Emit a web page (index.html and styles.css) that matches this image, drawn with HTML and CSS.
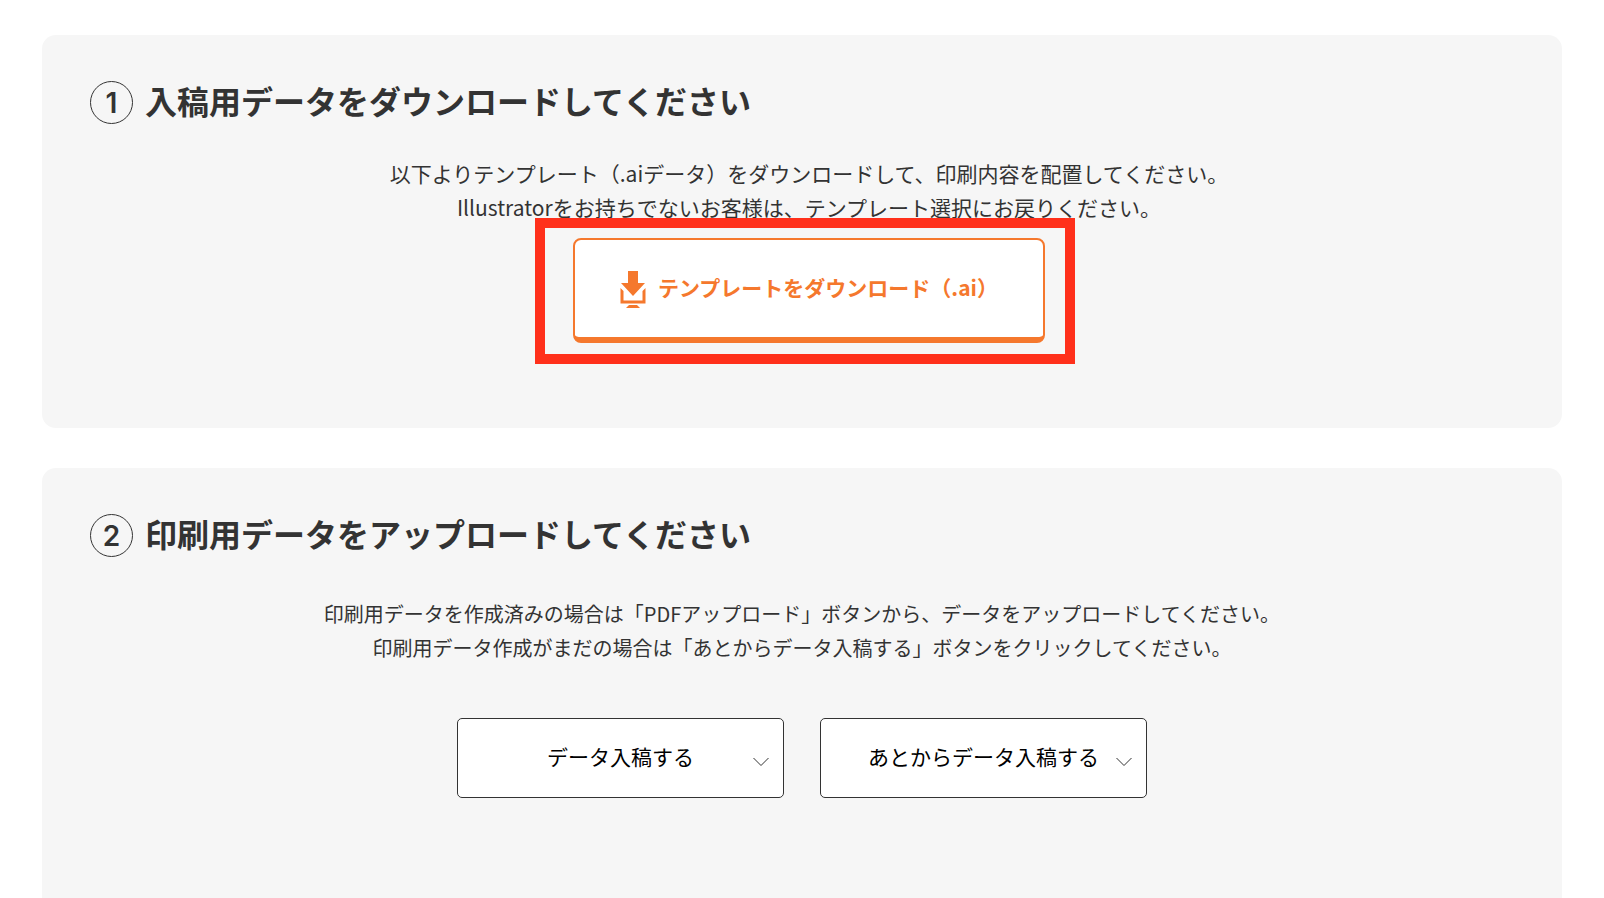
FILE: index.html
```html
<!DOCTYPE html>
<html lang="ja">
  <head>
    <meta charset="utf-8" />
    <meta name="viewport" content="width=device-width, initial-scale=1" />
    <title>データ入稿</title>
    <link rel="stylesheet" href="styles.css">
  </head>
  <body>
    <main class="steps">
      <section class="step">
        <h2 class="step-title"><span class="num">1</span>入稿用データをダウンロードしてください</h2>
        <div class="step-body download">
          <p class="lead">
            以下よりテンプレート（.aiデータ）をダウンロードして、印刷内容を配置してください。<br />
            Illustratorをお持ちでないお客様は、テンプレート選択にお戻りください。
          </p>
          <div class="highlight">
            <a class="btn-download" href="#">
              <svg class="icon" width="26" height="38" viewBox="0 0 26 38" aria-hidden="true">
                <path d="M8 0h10v12h7L13 25 1 12h7z" />
                <path d="M.5 17l3 3v9.500h19V20l3-3v15.500H.5z" />
                <path d="M9 34h8l3 3H6z" />
              </svg>
              <span>テンプレートをダウンロード（.ai）</span>
            </a>
          </div>
        </div>
      </section>

      <section class="step">
        <h2 class="step-title"><span class="num">2</span>印刷用データをアップロードしてください</h2>
        <div class="step-body upload">
          <p class="lead">
            印刷用データを作成済みの場合は「PDFアップロード」ボタンから、データをアップロードしてください。<br />
            印刷用データ作成がまだの場合は「あとからデータ入稿する」ボタンをクリックしてください。
          </p>
          <div class="buttons">
            <button class="btn-toggle" type="button">
              <span>データ入稿する</span>
              <svg class="chevron" width="16" height="10" viewBox="0 0 16 10" aria-hidden="true"><path d="M.5 1L8 8.500 15.500 1" /></svg>
            </button>
            <button class="btn-toggle" type="button">
              <span>あとからデータ入稿する</span>
              <svg class="chevron" width="16" height="10" viewBox="0 0 16 10" aria-hidden="true"><path d="M.5 1L8 8.500 15.500 1" /></svg>
            </button>
          </div>
        </div>
      </section>
    </main>
  </body>
</html>
```

FILE: styles.css
```css
* {
  box-sizing: border-box;
}

body {
  margin: 0;
  background: #fff;
  color: #333;
  font-family: "Noto Sans CJK JP", sans-serif;
}

.steps {
  display: flex;
  flex-direction: column;
  gap: 40px;
  padding: 35px 42px;
}

.step {
  padding: 46px 48px 85px;
  border-radius: 14px;
  background: #f6f6f6;
}

.step-title {
  display: flex;
  gap: 12px;
  margin: 0;
  font-size: 32px;
  line-height: 38px;
}

.num {
  display: flex;
  align-items: center;
  justify-content: center;
  width: 43px;
  height: 43px;
  border: 1px solid #333;
  border-radius: 50%;
  font-family: Inter, sans-serif;
  font-size: 28px;
  font-weight: 600;
}

.step-body {
  display: flex;
  flex-direction: column;
  align-items: center;
}

.lead {
  margin: 0;
  font-size: 20px;
  line-height: 34px;
  text-align: center;
}

/* step 1 */
.download {
  gap: 14px;
  padding: 32px 0 0 14px;
}

.download .lead {
  font-size: 21px;
}

.highlight {
  position: relative;
}

.highlight::before {
  content: "";
  position: absolute;
  inset: -20px -30px -21px -38px;
  border: 10px solid #ff301b;
  pointer-events: none;
}

.btn-download {
  display: flex;
  align-items: center;
  justify-content: center;
  gap: 12px;
  width: 472px;
  height: 105px;
  border: 2px solid #f5782d;
  border-bottom-width: 6px;
  border-radius: 8px;
  background: #fff;
  color: #f5782d;
  font-size: 21px;
  font-weight: 700;
  text-decoration: none;
}

.btn-download span,
.btn-toggle span {
  padding-bottom: 4px;
}

.icon {
  margin-top: 2px;
  fill: #f5782d;
}

/* step 2 */
.upload {
  gap: 53px;
  padding: 40px 0 80px;
}

.buttons {
  display: flex;
  gap: 36px;
}

.btn-toggle {
  display: grid;
  grid-template-columns: 1fr auto 1fr;
  align-items: center;
  width: 327px;
  height: 80px;
  padding: 0 14px;
  border: 1px solid #333;
  border-radius: 5px;
  background: #fff;
  color: #000;
  font-family: inherit;
  font-size: 21px;
  cursor: pointer;
}

.btn-toggle span {
  grid-column: 2;
}

.chevron {
  justify-self: end;
  margin-top: 8px;
  fill: none;
  stroke: #333;
}
```
